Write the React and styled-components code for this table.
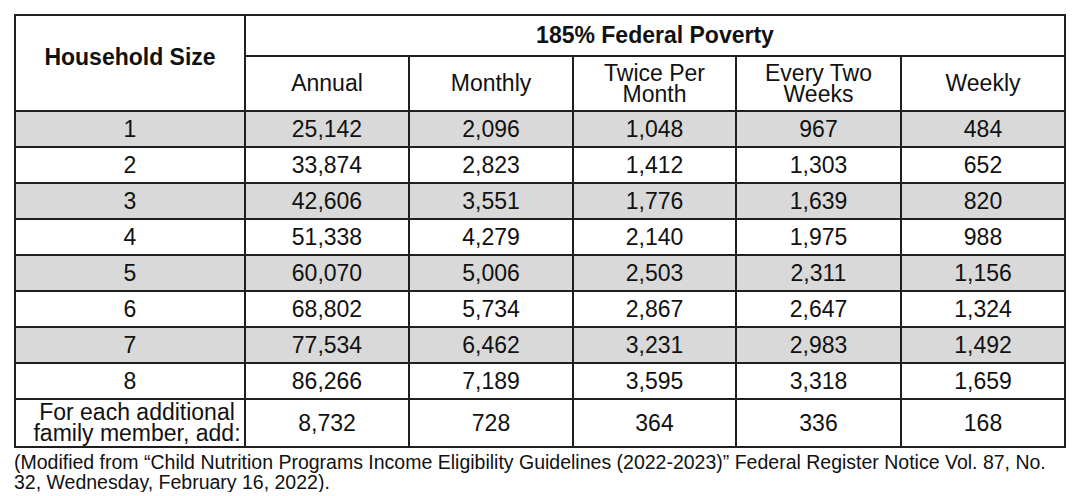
import React from "react";
import styled, { createGlobalStyle } from "styled-components";

const GlobalStyle = createGlobalStyle`
  body {
    margin: 0;
    background: #ffffff;
    font-family: "Liberation Sans", Arial, sans-serif;
    color: #111111;
  }
`;

const rows = [
  ["1", "25,142", "2,096", "1,048", "967", "484"],
  ["2", "33,874", "2,823", "1,412", "1,303", "652"],
  ["3", "42,606", "3,551", "1,776", "1,639", "820"],
  ["4", "51,338", "4,279", "2,140", "1,975", "988"],
  ["5", "60,070", "5,006", "2,503", "2,311", "1,156"],
  ["6", "68,802", "5,734", "2,867", "2,647", "1,324"],
  ["7", "77,534", "6,462", "3,231", "2,983", "1,492"],
  ["8", "86,266", "7,189", "3,595", "3,318", "1,659"],
];

const extra = ["8,732", "728", "364", "336", "168"];

const App = () => {
  return (
    <>
      <GlobalStyle />
      <Page>
        <Table>
          <colgroup>
            <col style={{ width: 230 }} />
            <col style={{ width: 164 }} />
            <col style={{ width: 164 }} />
            <col style={{ width: 163 }} />
            <col style={{ width: 165 }} />
            <col style={{ width: 164 }} />
          </colgroup>
          <thead>
            <HeadRow h={41}>
              <Th rowSpan={2} bold lift>
                Household Size
              </Th>
              <Th colSpan={5} bold>
                185% Federal Poverty
              </Th>
            </HeadRow>
            <HeadRow h={55}>
              <Th>Annual</Th>
              <Th>Monthly</Th>
              <Th>
                Twice Per
                <br />
                Month
              </Th>
              <Th>
                Every Two
                <br />
                Weeks
              </Th>
              <Th>Weekly</Th>
            </HeadRow>
          </thead>
          <tbody>
            {rows.map((r, idx) => (
              <DataRow key={idx} shaded={idx % 2 === 0}>
                {r.map((v, i) => (
                  <Td key={i}>{v}</Td>
                ))}
              </DataRow>
            ))}
            <LastRow>
              <Td label>
                For each additional
                <br />
                family member, add:
              </Td>
              {extra.map((v, i) => (
                <Td key={i}>{v}</Td>
              ))}
            </LastRow>
          </tbody>
        </Table>
        <Note>
          (Modified from “Child Nutrition Programs Income Eligibility Guidelines
          (2022-2023)” Federal Register Notice Vol. 87, No. 32, Wednesday,
          February 16, 2022).
        </Note>
      </Page>
    </>
  );
};

const Page = styled.div`
  padding: 14px 14px 0 14px;
  width: 1050px;
`;

const Table = styled.table`
  width: 1050px;
  table-layout: fixed;
  border-collapse: collapse;
  font-size: 23px;
  color: #111111;
`;

const HeadRow = styled.tr`
  height: ${(p) => p.h}px;
`;

const Th = styled.th`
  border: 2px solid #1f1f1f;
  padding: 0 0 ${(p) => (p.lift ? "12px" : "0")} 0;
  font-weight: ${(p) => (p.bold ? 700 : 400)};
  line-height: 21px;
  text-align: center;
  vertical-align: middle;
`;

const DataRow = styled.tr`
  height: 36px;
  background-color: ${(p) => (p.shaded ? "#d9d9d9" : "#ffffff")};
`;

const LastRow = styled.tr`
  height: 48px;
`;

const Td = styled.td`
  border: 2px solid #1f1f1f;
  padding: 0 0 0 ${(p) => (p.label ? "14px" : "0")};
  text-align: center;
  white-space: nowrap;
  line-height: 21px;
  vertical-align: middle;
`;

const Note = styled.p`
  margin: 4px 0 0 0;
  font-size: 19.5px;
  line-height: 20px;
  color: #111111;
`;

export default App;
